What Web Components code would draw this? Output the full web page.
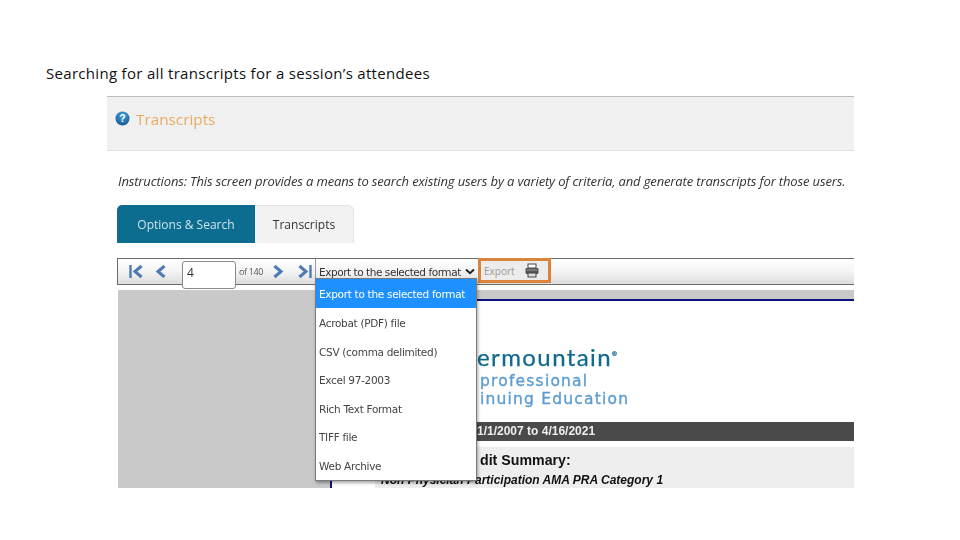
<!DOCTYPE html>
<html>
<head>
<meta charset="utf-8">
<title>Transcripts</title>
<style>
  html, body { margin: 0; background: #fff; }
  body { width: 960px; height: 540px; overflow: hidden; font-family: "Liberation Sans", Arial, sans-serif; }
</style>
</head>
<body>
<slide-page>
  <span slot="title">Searching for all transcripts for a session’s attendees</span>
  <transcript-shot>
    <shot-header slot="header">Transcripts</shot-header>
    <span slot="instructions">Instructions: This screen provides a means to search existing users by a variety of criteria, and generate transcripts for those users.</span>
    <shot-tabs slot="tabs"></shot-tabs>
    <report-toolbar slot="toolbar"></report-toolbar>
    <report-view slot="report"></report-view>
  </transcript-shot>
</slide-page>

<script>
// shared helper: every element gets an open shadow root from a string
class BaseEl extends HTMLElement {
    constructor() {
        super();
        this.attachShadow({ mode: 'open' });
        this.shadowRoot.innerHTML = this.constructor.markup;
    }
}

class SlidePage extends BaseEl {
    static markup = `
      <style>
        :host { display: flex; flex-direction: column; width: 960px; height: 540px; box-sizing: border-box; padding: 63px 0 0 46px; }
        .title { font: 15px/20px "Open Sans", sans-serif; color: #111; letter-spacing: .31px; height: 33px; }
        .body { margin-left: 61px; }
      </style>
      <div class="title"><slot name="title"></slot></div>
      <div class="body"><slot></slot></div>`;
}

class TranscriptShot extends BaseEl {
    static markup = `
      <style>
        :host { display: flex; flex-direction: column; position: relative; width: 747px; height: 392px; overflow: hidden; filter: blur(.3px); }
        .inst { font: italic 13px/16px "Open Sans", sans-serif; color: #333; margin: 22px 0 0 11px; white-space: nowrap; letter-spacing: -.14px; height: 32px; }
        .inner { padding-left: 10px; }
      </style>
      <slot name="header"></slot>
      <div class="inst"><slot name="instructions"></slot></div>
      <div class="inner"><slot name="tabs"></slot></div>
      <div class="inner"><slot name="toolbar"></slot></div>
      <div class="inner" style="padding-left:11px"><slot name="report"></slot></div>`;
}

class ShotHeader extends BaseEl {
    static markup = `
      <style>
        :host { display: flex; align-items: center; gap: 6px; height: 46px; background: #f0f0f0; border-top: 1px solid #bdbdbd; border-bottom: 1px solid #e2e2e2; padding-left: 8px; padding-bottom: 8px; font: 15.3px "Open Sans", sans-serif; color: #e9ab62; }
        svg { flex: none; margin-top: -2px; }
        span { margin-top: -1px; }
      </style>
      <svg width="15" height="15" viewBox="0 0 15 15">
        <defs><radialGradient id="q" cx=".5" cy=".3" r=".8"><stop offset="0" stop-color="#4aa5dc"/><stop offset="1" stop-color="#0b4f8c"/></radialGradient></defs>
        <circle cx="7.5" cy="7.5" r="7" fill="url(#q)"/>
        <text x="7.5" y="11" text-anchor="middle" font-family="Liberation Sans" font-weight="700" font-size="10" fill="#fff">?</text>
      </svg>
      <span><slot></slot></span>`;
}

class ShotTabs extends BaseEl {
    static markup = `
      <style>
        :host { display: flex; height: 38px; font: 12px "Open Sans", sans-serif; }
        div { display: flex; align-items: center; justify-content: center; box-sizing: border-box; }
        .on { width: 138px; background: #0d6d90; color: #cfe3ea; border-radius: 5px 0 0 0; }
        .off { width: 99px; background: #f2f2f2; color: #333; border: 1px solid #e3e3e3; border-width: 1px 1px 0 0; border-radius: 0 6px 0 0; }
      </style>
      <div class="on">Options &amp; Search</div>
      <div class="off">Transcripts</div>`;
}

class ReportToolbar extends BaseEl {
    static markup = `
      <style>
        :host { display: flex; align-items: center; position: relative; margin-top: 15px; height: 25px; border: 1px solid #6b6b6b; border-right: 0; background: linear-gradient(#fff 0, #f4f4f4 50%, #dcdcdc 100%); font-family: "Open Sans", sans-serif; }
        svg { flex: none; }
        .first { margin-left: 11px; }
        .prev { margin-left: 11px; }
        .page { flex: none; box-sizing: border-box; width: 54px; height: 28px; margin: 3px 0 -3px 15px; padding: 0 4px; background: #fff; border: 1px solid #8a8a8a; border-radius: 3px; font-size: 12px; line-height: 22px; color: #333; }
        .of { font-size: 9px; color: #555; margin-left: 3px; width: 24px; white-space: nowrap; letter-spacing: -.35px; }
        .next { margin-left: 9px; }
        .last { margin-left: 13px; }
        .sel { display: flex; align-items: center; box-sizing: border-box; height: 25px; margin-left: 3px; padding-left: 3px; width: 163px; border-left: 1px solid #999; font: 10.5px "DejaVu Sans", sans-serif; color: #333; letter-spacing: -.45px; white-space: nowrap; }
        .sel svg { margin-left: 4px; }
        .export { display: flex; align-items: center; align-self: flex-start; margin-top: -1px; box-sizing: border-box; width: 73px; height: 25px; border: 3px solid #d9833d; background: #ececec; padding-left: 3px; font-size: 10px; color: #9a9a9a; }
        .export svg { margin-left: 10px; }
      </style>
      <svg class="first" width="15" height="15" viewBox="0 0 15 15" fill="none" stroke="#4d7bb5"><path d="M1.5 1v13" stroke-width="2.4"/><path d="M12.5 2L6 7.5 12.5 13" stroke-width="3"/></svg>
      <svg class="prev" width="12" height="15" viewBox="0 0 12 15" fill="none" stroke="#4d7bb5"><path d="M9.5 2L3 7.5 9.5 13" stroke-width="3"/></svg>
      <div class="page">4</div>
      <div class="of">of 140</div>
      <svg class="next" width="12" height="15" viewBox="0 0 12 15" fill="none" stroke="#4d7bb5"><path d="M2.5 2L9 7.5 2.5 13" stroke-width="3"/></svg>
      <svg class="last" width="15" height="15" viewBox="0 0 15 15" fill="none" stroke="#4d7bb5"><path d="M2.5 2L9 7.5 2.5 13" stroke-width="3"/><path d="M13.5 1v13" stroke-width="2.4"/></svg>
      <div class="sel">Export to the selected format<svg width="10" height="7" viewBox="0 0 10 7" fill="none" stroke="#222" stroke-width="2"><path d="M1 1.5L5 5.2 9 1.5"/></svg></div>
      <div class="export">Export
        <svg width="14" height="15" viewBox="0 0 14 15">
          <rect x="3" y="1" width="8" height="4" fill="#fff" stroke="#444"/>
          <rect x="0.5" y="5" width="13" height="6" rx="1" fill="#555"/>
          <rect x="3" y="10" width="8" height="4" fill="#ddd" stroke="#444"/>
          <path d="M2 7h10" stroke="#999"/>
        </svg>
      </div>
      <export-menu></export-menu>`;
}

class ExportMenu extends BaseEl {
    static markup = `
      <style>
        :host { display: block; position: absolute; left: 197px; top: 19px; width: 162px; box-sizing: border-box; background: #fff; border: 1px solid #7a7a7a; box-shadow: 1px 2px 3px rgba(0,0,0,.35); font: 10.5px "DejaVu Sans", sans-serif; color: #444; letter-spacing: -.3px; z-index: 2; }
        div { height: 28.6px; line-height: 30px; padding-left: 3px; white-space: nowrap; }
        .on { background: #1e90ff; color: #fff; height: 29px; }
      </style>
      <div class="on">Export to the selected format</div>
      <div>Acrobat (PDF) file</div>
      <div>CSV (comma delimited)</div>
      <div>Excel 97-2003</div>
      <div>Rich Text Format</div>
      <div>TIFF file</div>
      <div>Web Archive</div>`;
}

class ReportView extends BaseEl {
    static markup = `
      <style>
        :host { display: grid; grid-template-columns: 212px 1fr; margin-top: 5px; height: 198px; font-family: "Liberation Sans", sans-serif; }
        .side { background: #c9c9c9; }
        .main { display: flex; flex-direction: column; min-width: 0; overflow: hidden; }
        .rule { flex: none; height: 9px; background: #c9c9c9; border-bottom: 2px solid #10107a; }
        .content { flex: 1; border-left: 2px solid #10107a; padding-left: 43px; min-height: 0; }
        .logo { height: 121px; box-sizing: border-box; padding: 41px 0 0 102px; white-space: nowrap; }
        .l1 { font: 24px/29px Lato, sans-serif; color: #0f6a8c; letter-spacing: 1.4px; height: 30px; -webkit-text-stroke: .25px #0f6a8c; }
        .l1 sup { font-size: 6px; line-height: 0; vertical-align: 10px; letter-spacing: 0; }
        .l2 { font: 15.5px/18px "DejaVu Sans", sans-serif; color: #5c9ccf; padding-left: 3px; height: 18px; letter-spacing: 1.2px; -webkit-text-stroke: .35px #5c9ccf; }
        .range { height: 19px; background: #4a4a4a; color: #eee; font-size: 12px; line-height: 19px; padding-left: 102px; font-weight: 700; white-space: nowrap; box-sizing: border-box; }
        .sum { margin-top: 6px; height: 60px; background: #eeeeee; padding-left: 6px; color: #111; white-space: nowrap; }
        .sum b { display: block; font-size: 14.2px; line-height: 26px; padding-left: 99px; }
        .sum i { display: block; font-size: 12px; font-weight: 700; line-height: 14px; }
      </style>
      <div class="side"></div>
      <div class="main">
        <div class="rule"></div>
        <div class="content">
          <div class="logo">
            <div class="l1">ermountain<sup>®</sup></div>
            <div class="l2">professional</div>
            <div class="l2">inuing Education</div>
          </div>
          <div class="range">1/1/2007 to 4/16/2021</div>
          <div class="sum">
            <b>dit Summary:</b>
            <i>Non Physician Participation AMA PRA Category 1</i>
          </div>
        </div>
      </div>`;
}

customElements.define('slide-page', SlidePage);
customElements.define('transcript-shot', TranscriptShot);
customElements.define('shot-header', ShotHeader);
customElements.define('shot-tabs', ShotTabs);
customElements.define('report-toolbar', ReportToolbar);
customElements.define('export-menu', ExportMenu);
customElements.define('report-view', ReportView);
</script>
</body>
</html>
